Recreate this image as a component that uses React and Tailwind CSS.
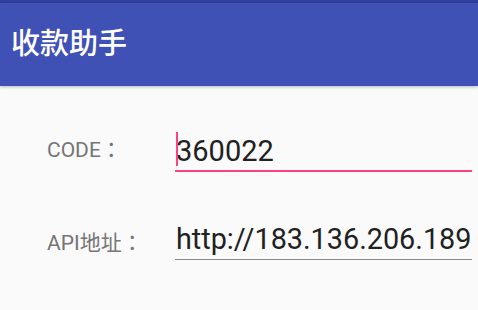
import React from 'react';

const font = { fontFamily: 'Roboto, "Noto Sans CJK SC", sans-serif' };

function Label({ children, className }) {
  return (
    <div className={`w-[128px] text-[21px] leading-[26px] text-[#757575] ${className}`}>
      {children}
      <span className="font-['Noto_Sans_CJK_TC',sans-serif]">：</span>
    </div>
  );
}

export default function App() {
  return (
    <div className="w-[478px] h-[310px] bg-[#fafafa] overflow-hidden" style={font}>
      {/* status bar edge + toolbar */}
      <div className="h-[3px] bg-[#303f9f]" />
      <div className="h-[83px] bg-[#3f51b5] flex items-center pl-[11px] shadow-[0_1px_3px_rgba(0,0,0,0.25)] relative">
        <h1 className="text-white text-[29px] font-medium leading-none">收款助手</h1>
      </div>

      <div className="pl-[47px] pr-[6px] pt-[46px]">
        {/* CODE row */}
        <div className="flex items-start">
          <Label className="pt-[3px]">CODE</Label>
          <div className="flex-1 relative pt-[2px] pb-[2px] border-b-2 border-[#ff4081]">
            <span className="absolute left-[1px] top-0 w-[2px] h-[34px] bg-[#ff4081]" />
            <div className="text-[29px] leading-[34px] text-[#212121] pl-[1px]">360022</div>
          </div>
        </div>

        {/* API row */}
        <div className="flex items-start mt-[50px]">
          <Label className="pt-[6px]">API地址</Label>
          <div className="flex-1 pb-[3px] border-b border-[#8a8a8a]">
            <div className="text-[28.8px] leading-[34px] text-[#212121] pl-[1px] whitespace-nowrap">http://183.136.206.189</div>
          </div>
        </div>
      </div>
    </div>
  );
}
